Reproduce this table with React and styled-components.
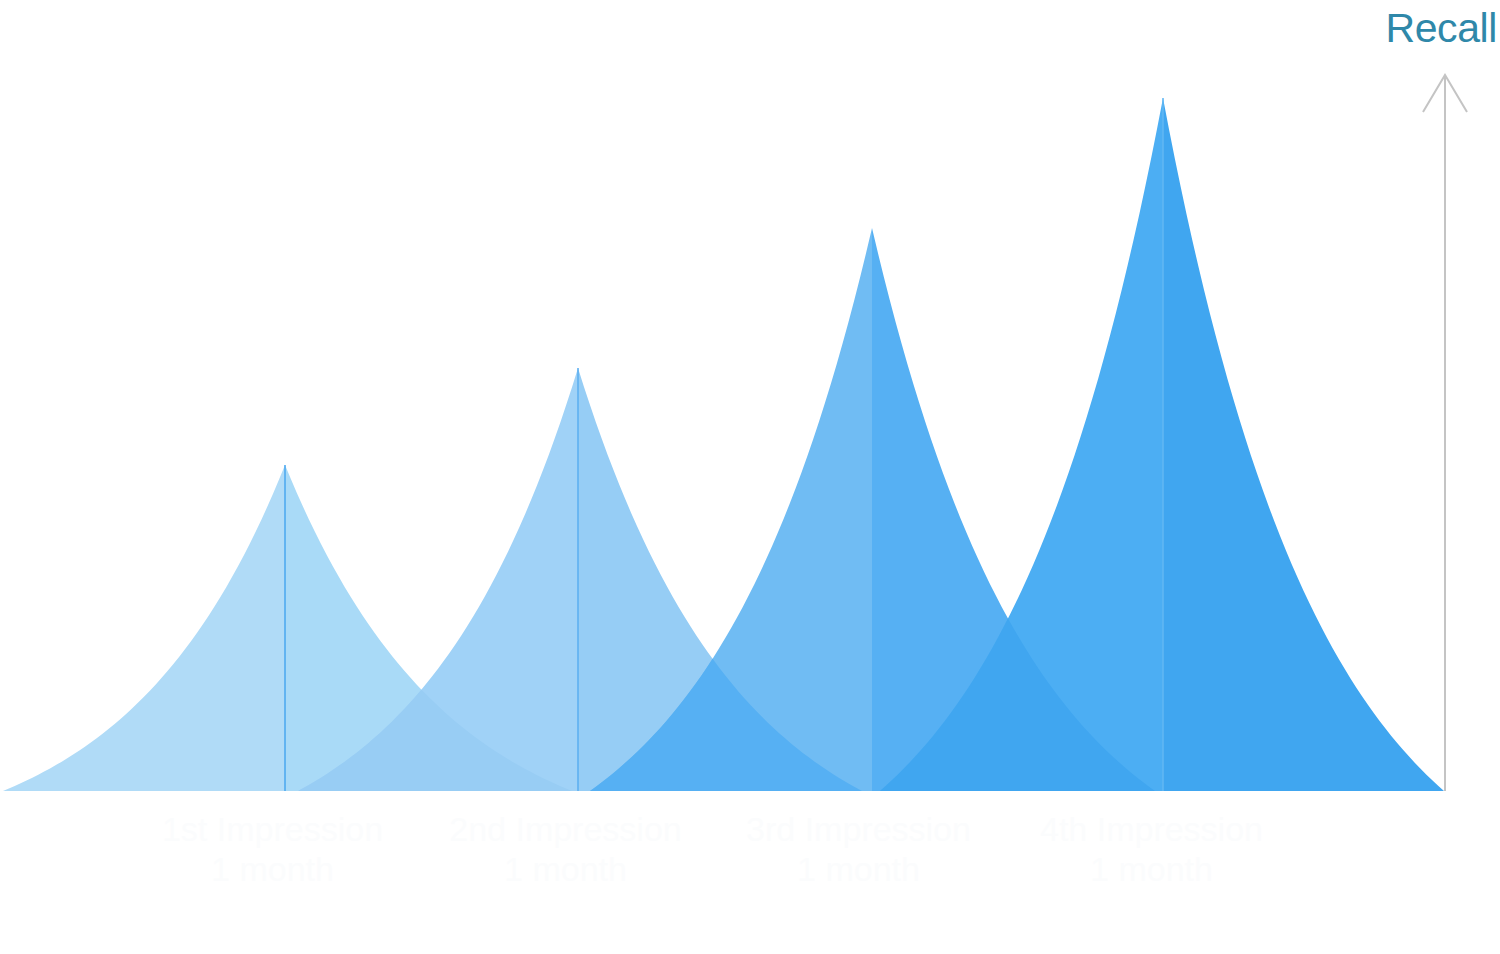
import React from "react";
import styled, { createGlobalStyle } from "styled-components";

const BASE = 791;
const K = 1.8; // steepness of the forgetting curve
const STEPS = 48;

// apex, left/right feet and the two shades of each recall peak
const peaks = [
  { ax: 285, ay: 465, xl: 3, xr: 572, left: "#b0dbf7", right: "#a9daf7", line: "#4aa7ef", label: "1st Impression", sub: "1 month" },
  { ax: 578, ay: 368, xl: 298, xr: 862, left: "#a0d2f7", right: "#96cdf5", line: "#5aaef0", label: "2nd Impression", sub: "1 month" },
  { ax: 872, ay: 228, xl: 590, xr: 1155, left: "#70bcf3", right: "#56b0f3", line: null, label: "3rd Impression", sub: "1 month" },
  { ax: 1163, ay: 98, xl: 880, xr: 1444, left: "#4caef3", right: "#40a6f0", line: "#62b7f3", label: "4th Impression", sub: "1 month" },
];

// where one peak's falling side crosses the next one's rising side
const overlaps = ["#98cdf4", "#56b0f3", "#40a6f0"];

const drop = (t) => (1 - Math.exp(-K * t)) / (1 - Math.exp(-K));

// points from the apex outwards to the foot at x = foot
const side = ({ ax, ay }, foot) => {
  const pts = [];
  for (let i = 0; i <= STEPS; i++) {
    const t = i / STEPS;
    const x = ax + (foot - ax) * t;
    const y = ay + (BASE - ay) * drop(t);
    pts.push(`${x.toFixed(2)} ${y.toFixed(2)}`);
  }
  return pts;
};

const leftHalf = (p) => `M ${p.ax} ${BASE} L ${side(p, p.xl).join(" L ")} Z`;
const rightHalf = (p) => `M ${p.ax} ${BASE} L ${side(p, p.xr).join(" L ")} Z`;

const GlobalStyle = createGlobalStyle`
  html, body {
    margin: 0;
    padding: 0;
    background: #ffffff;
    overflow: hidden;
  }
  body {
    font-family: "Liberation Sans", Arial, sans-serif;
  }
`;

const Page = styled.div`
  width: 1500px;
  height: 954px;
  display: flex;
  flex-direction: column;
`;

const Header = styled.header`
  display: flex;
  justify-content: flex-end;
  padding: 8px 3px 0 0;
`;

const AxisTitle = styled.h1`
  margin: 0;
  font-size: 41px;
  line-height: 41px;
  font-weight: 400;
  letter-spacing: -0.4px;
  color: #2f88a9;
`;

const Chart = styled.svg`
  display: block;
  width: 1500px;
  height: 751px;
`;

const Labels = styled.div`
  display: grid;
  grid-template-columns: repeat(4, 293px);
  padding-left: 126px;
  margin-top: 9px;
`;

const Label = styled.div`
  display: flex;
  flex-direction: column;
  align-items: center;
  font-size: 34px;
  line-height: 40px;
  color: #fbfcfd;
  white-space: nowrap;
`;

export default function App() {
  return (
    <Page>
      <GlobalStyle />
      <Header>
        <AxisTitle>Recall</AxisTitle>
      </Header>
      <Chart viewBox="0 49 1500 751">
        <defs>
          {peaks.map((p, i) => (
            <clipPath id={`rise-${i}`} key={i}>
              <path d={leftHalf(p)} />
            </clipPath>
          ))}
        </defs>
        {peaks.map((p, i) => (
          <g key={i}>
            <path d={leftHalf(p)} fill={p.left} />
            <path d={rightHalf(p)} fill={p.right} />
          </g>
        ))}
        {overlaps.map((c, i) => (
          <path key={i} d={rightHalf(peaks[i])} fill={c} clipPath={`url(#rise-${i + 1})`} />
        ))}
        {peaks.map((p, i) =>
          p.line ? (
            <line key={i} x1={p.ax} y1={p.ay} x2={p.ax} y2={BASE} stroke={p.line} strokeWidth="1.5" />
          ) : null
        )}
        <line x1="1445" y1="76" x2="1445" y2={BASE} stroke="#c4c4c4" strokeWidth="2" />
        <polyline points="1423,112 1445,75 1467,112" fill="none" stroke="#c4c4c4" strokeWidth="2" />
      </Chart>
      <Labels>
        {peaks.map((p, i) => (
          <Label key={i}>
            <span>{p.label}</span>
            <span>{p.sub}</span>
          </Label>
        ))}
      </Labels>
    </Page>
  );
}
